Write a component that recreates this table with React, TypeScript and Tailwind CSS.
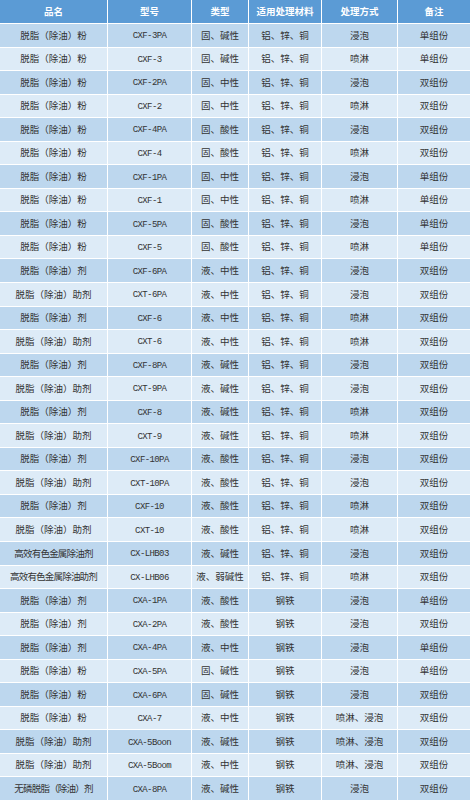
import { Fragment } from "react";

const headers = ["品名", "型号", "类型", "适用处理材料", "处理方式", "备注"];

const AL = "铝、锌、铜";

const rows: string[][] = [
    ["脱脂（除油）粉", "CXF-3PA", "固、碱性", AL, "浸泡", "单组份"],
    ["脱脂（除油）粉", "CXF-3", "固、碱性", AL, "喷淋", "单组份"],
    ["脱脂（除油）粉", "CXF-2PA", "固、中性", AL, "浸泡", "双组份"],
    ["脱脂（除油）粉", "CXF-2", "固、中性", AL, "喷淋", "双组份"],
    ["脱脂（除油）粉", "CXF-4PA", "固、酸性", AL, "浸泡", "双组份"],
    ["脱脂（除油）粉", "CXF-4", "固、酸性", AL, "喷淋", "双组份"],
    ["脱脂（除油）粉", "CXF-1PA", "固、中性", AL, "浸泡", "单组份"],
    ["脱脂（除油）粉", "CXF-1", "固、中性", AL, "喷淋", "单组份"],
    ["脱脂（除油）粉", "CXF-5PA", "固、酸性", AL, "浸泡", "单组份"],
    ["脱脂（除油）粉", "CXF-5", "固、酸性", AL, "喷淋", "单组份"],
    ["脱脂（除油）剂", "CXF-6PA", "液、中性", AL, "浸泡", "双组份"],
    ["脱脂（除油）助剂", "CXT-6PA", "液、中性", AL, "浸泡", "双组份"],
    ["脱脂（除油）剂", "CXF-6", "液、中性", AL, "喷淋", "双组份"],
    ["脱脂（除油）助剂", "CXT-6", "液、中性", AL, "喷淋", "双组份"],
    ["脱脂（除油）剂", "CXF-8PA", "液、碱性", AL, "浸泡", "双组份"],
    ["脱脂（除油）助剂", "CXT-9PA", "液、碱性", AL, "浸泡", "双组份"],
    ["脱脂（除油）剂", "CXF-8", "液、碱性", AL, "喷淋", "双组份"],
    ["脱脂（除油）助剂", "CXT-9", "液、碱性", AL, "喷淋", "双组份"],
    ["脱脂（除油）剂", "CXF-10PA", "液、酸性", AL, "浸泡", "双组份"],
    ["脱脂（除油）助剂", "CXT-10PA", "液、酸性", AL, "浸泡", "双组份"],
    ["脱脂（除油）剂", "CXF-10", "液、酸性", AL, "喷淋", "双组份"],
    ["脱脂（除油）助剂", "CXT-10", "液、酸性", AL, "喷淋", "双组份"],
    ["高效有色金属除油剂", "CX-LHB03", "液、碱性", AL, "浸泡", "双组份"],
    ["高效有色金属除油助剂", "CX-LHB06", "液、弱碱性", AL, "喷淋", "双组份"],
    ["脱脂（除油）剂", "CXA-1PA", "液、酸性", "钢铁", "浸泡", "单组份"],
    ["脱脂（除油）剂", "CXA-2PA", "液、酸性", "钢铁", "浸泡", "双组份"],
    ["脱脂（除油）剂", "CXA-4PA", "液、中性", "钢铁", "浸泡", "单组份"],
    ["脱脂（除油）粉", "CXA-5PA", "固、碱性", "钢铁", "浸泡", "单组份"],
    ["脱脂（除油）粉", "CXA-6PA", "固、碱性", "钢铁", "浸泡", "双组份"],
    ["脱脂（除油）粉", "CXA-7", "液、中性", "钢铁", "喷淋、浸泡", "双组份"],
    ["脱脂（除油）助剂", "CXA-5Boon", "液、碱性", "钢铁", "喷淋、浸泡", "双组份"],
    ["脱脂（除油）助剂", "CXA-5Boom", "液、中性", "钢铁", "喷淋、浸泡", "双组份"],
    ["无磷脱脂（除油）剂", "CXA-8PA", "液、碱性", "钢铁", "浸泡", "双组份"],
];

const App = () => {
    return (
        <div
            className="w-[470px] h-[800px] bg-white grid gap-px grid-cols-[107px_83px_56px_72px_75px_1fr] grid-rows-[23px_repeat(33,minmax(0,1fr))] text-[9.5px] text-[#333333]"
            style={{ fontFamily: '"Noto Sans CJK SC", "Noto Sans", sans-serif' }}
        >
            {headers.map((h) => (
                <div
                    key={h}
                    className="bg-[#5b9bd5] text-white font-bold flex items-center justify-center"
                >
                    {h}
                </div>
            ))}
            {rows.map((row, i) => {
                const bg = i % 2 === 0 ? "bg-[#bdd7ee]" : "bg-[#ddebf7]";
                return (
                    <Fragment key={i}>
                        {row.map((cell, j) =>
                            j === 1 ? (
                                <div
                                    key={j}
                                    className={`${bg} flex items-center justify-center whitespace-nowrap leading-none pt-[3px] font-['Liberation_Mono',monospace] text-[9px] tracking-[-0.6px]`}
                                >
                                    {cell}
                                </div>
                            ) : (
                                <div
                                    key={j}
                                    className={`${bg} flex items-center justify-center whitespace-nowrap leading-none ${
                                        cell.length > 8 ? "tracking-[-0.8px]" : ""
                                    }`}
                                >
                                    {cell}
                                </div>
                            )
                        )}
                    </Fragment>
                );
            })}
        </div>
    );
};

export default App;
